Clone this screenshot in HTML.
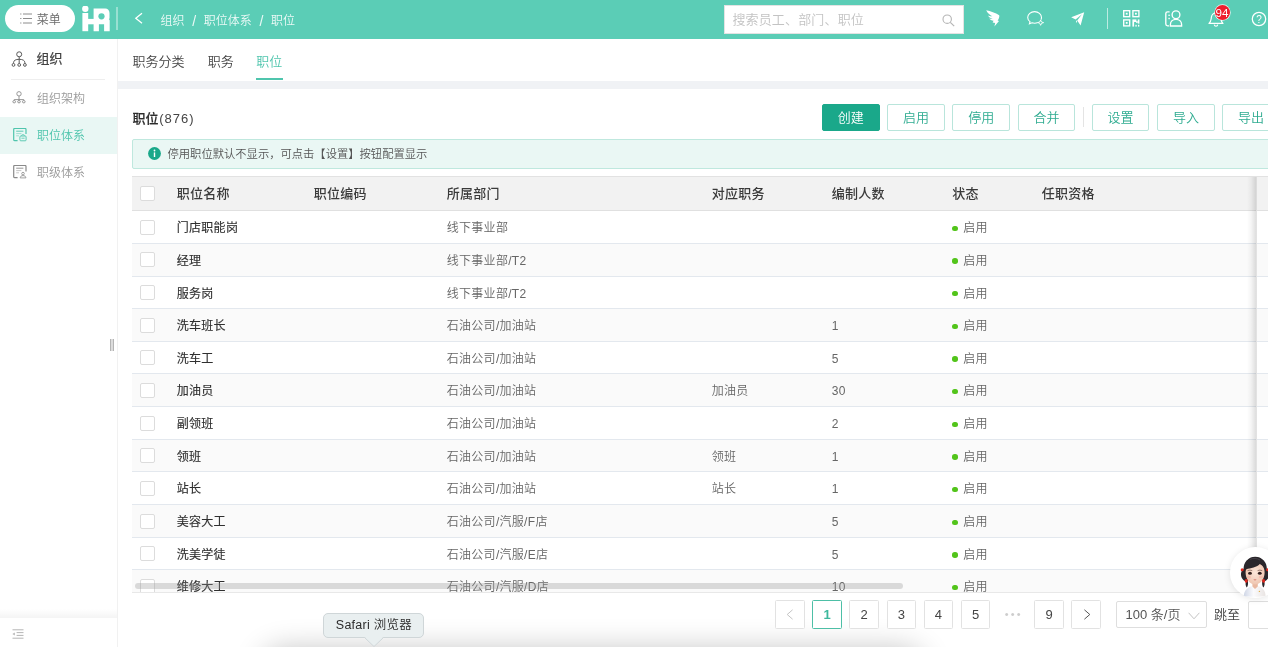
<!DOCTYPE html>
<html lang="zh-CN">
<head>
<meta charset="utf-8">
<title>职位</title>
<style>
*{box-sizing:border-box;margin:0;padding:0}
html,body{width:1268px;height:647px;overflow:hidden;background:#fff}
body{position:relative;will-change:transform;font-family:"Liberation Sans","Noto Sans CJK SC",sans-serif;font-size:12px;font-weight:350;color:#333;-webkit-font-smoothing:antialiased}
.abs{position:absolute}
/* header */
#hdr{position:absolute;left:0;top:0;width:1268px;height:38.7px;background:#5bcdb6}
#pill{position:absolute;left:4.8px;top:4.6px;width:70.4px;height:27.6px;border-radius:14px;background:#fff;color:#6a6a6a;font-size:12px;line-height:30.6px}
#pill span{position:absolute;left:32px;top:0}
#crumb{position:absolute;left:160.5px;top:10px;height:21px;line-height:22px;font-size:12px;color:rgba(255,255,255,.88);white-space:nowrap}
#crumb i{font-style:normal;margin:0 7.6px 0 7.7px;font-size:14px;line-height:10px;position:relative;top:.6px}
#search{position:absolute;left:724px;top:5px;width:240px;height:28.5px;background:#fff;border:1px solid #e3e3e3;color:#c3c3c3;font-size:13px;line-height:28.6px;padding-left:7.4px;letter-spacing:.16px;white-space:nowrap}
.hline{position:absolute;width:1.2px;background:rgba(255,255,255,.6)}
/* sidebar */
#side{position:absolute;left:0;top:38.7px;width:117.8px;height:609px;background:#fff;border-right:1px solid #f1f1f1}
.sitem{position:absolute;left:0;width:116.5px;height:37.1px;line-height:37.1px;font-size:12px;color:#9a9a9a;padding-left:37px;white-space:nowrap}
.sitem.on{background:#e9f7f4;color:#4fc5ad}
/* tabs */
#tabs{position:absolute;left:117.5px;top:38.7px;width:1151px;height:42.5px;background:#fff}
#tabs span{position:absolute;top:0;line-height:46px;font-size:13px;font-weight:350;color:#444;white-space:nowrap}
#strip{position:absolute;left:117.5px;top:81.2px;width:1151px;height:7.5px;background:#f0f2f5}
/* buttons */
.btn{position:absolute;top:103.5px;width:57.6px;height:27.8px;border:1px solid #b9e5db;border-radius:2px;background:#fff;color:#2eab90;font-size:13px;line-height:25.8px;text-align:center;white-space:nowrap}
.btn.pri{background:#1aa88a;border-color:#1aa88a;color:#fff}
/* alert */
#alert{position:absolute;left:132px;top:138.8px;width:1160px;height:30px;background:#eaf7f4;border:1px solid #bfe8de;border-radius:2px;font-size:11.3px;line-height:28.8px;color:#555;padding-left:34.5px;white-space:nowrap}
/* table */
#tbl{position:absolute;left:132.2px;top:175.8px;width:1136px;height:417px;overflow:hidden;border-top:1px solid #e2e2e2;border-bottom:1px solid #e8e8e8}
#thead{position:absolute;left:0;top:0;width:1136px;height:34px;background:#f2f2f2;border-bottom:1px solid #e0e0e0}
#thead span{position:absolute;top:0;line-height:34px;font-size:13px;font-weight:500;color:#3a3a3a;white-space:nowrap;letter-spacing:.25px}
.row{position:absolute;left:0;width:1136px;height:32.66px;margin-top:.4px;border-bottom:1px solid #e3e8ee;background:#fff}
.row.z{background:#fafafa}
.row span{position:absolute;top:0;line-height:35.6px;font-size:12px;color:#666;white-space:nowrap;letter-spacing:.3px}
.row span.n{left:44.5px;color:#303030;font-weight:400;-webkit-text-stroke:.14px #303030}
.row span.d{left:314.5px}
.row span.j{left:579.5px}
.row span.c{left:699.5px}
.row span.s{left:831px}
.row span.s:before{content:"";position:absolute;left:-11px;top:14.4px;width:5.6px;height:5.6px;border-radius:50%;background:#52c41a}
.cb{position:absolute;left:7.8px;width:15px;height:14.8px;border:1px solid #dcdcdc;border-radius:2px;background:#fff}
/* pagination */
.pg{position:absolute;top:599.8px;width:29.7px;height:29.3px;border:1px solid #e2e2e2;border-radius:1.5px;background:#fff;color:#444;font-size:13px;line-height:27.3px;text-align:center}
.pg.on{border-color:#4dbfa6;color:#3db89d;font-weight:700}
</style>
</head>
<body>

<!-- bottom glow (dock shadow) -->
<div class="abs" style="left:268px;top:655px;width:650px;height:40px;border-radius:16px;background:#999;box-shadow:0 0 30px 6px rgba(0,0,0,.24)"></div>

<!-- ===== header ===== -->
<div id="hdr">
  <div id="pill">
    <svg class="abs" style="left:15px;top:8.6px" width="13" height="11" viewBox="0 0 13 11"><g stroke="#808080" stroke-width="0.9" fill="none"><path d="M0.2 1H1.4M3 1H12M0.2 5.5H1.4M3 5.5H12M0.2 10H1.4M3 10H12"/></g></svg>
    <span>菜单</span>
  </div>
  <!-- logo iHR -->
  <svg class="abs" style="left:82px;top:5.5px" width="28" height="26" viewBox="0 0 28 26">
    <g fill="#fff">
      <circle cx="3.3" cy="2.8" r="3.2"/>
      <rect x="0.4" y="7" width="5.8" height="18.2"/>
      <rect x="6" y="12.9" width="6" height="5.4"/>
      <path d="M11.6 2.6H23.2C25.7 2.6 27.5 4.5 27.5 7V12C27.5 12.6 27.2 13 26.9 13.3C27.4 13.6 27.7 14 27.7 14.6V25.2H22.1V18.3H16.9V25.2H11.6Z"/>
    </g>
    <circle cx="19.5" cy="10.3" r="3.1" fill="#5bcdb6"/>
  </svg>
  <div class="hline" style="left:116.4px;top:7.2px;height:22.4px;width:1.4px;background:rgba(255,255,255,.38)"></div>
  <svg class="abs" style="left:134px;top:12.4px" width="10" height="13" viewBox="0 0 10 13"><path d="M8 1.2L1.8 6.2L8 11.2" stroke="#fff" stroke-width="1.3" fill="none"/></svg>
  <div id="crumb">组织<i>/</i>职位体系<i>/</i>职位</div>

  <div id="search">搜索员工、部门、职位
    <svg class="abs" style="left:217px;top:7.6px" width="13" height="13" viewBox="0 0 13 13"><circle cx="5.2" cy="5.2" r="4.2" stroke="#b5b5b5" stroke-width="1.1" fill="none"/><path d="M8.3 8.3L12.2 12.2" stroke="#b5b5b5" stroke-width="1.2"/></svg>
  </div>

  <!-- dingtalk -->
  <svg class="abs" style="left:986px;top:10px" width="14" height="17" viewBox="0 0 14 17"><path fill="#fff" d="M0.2 0.2C4.5 1.2 9.5 2.6 13.2 5.2C13.8 6.8 12.6 9.2 11.6 10.6L13 11L8.4 16.6L9.2 13L6.6 12.4L7.6 10.8C5.6 10.6 4 9.8 3.2 8.6C4.4 8.9 5.6 9 6.6 8.9C4.4 8.2 2.6 6.8 2 5.4C3.4 5.9 5 6.3 6.4 6.3C3.8 5 1.4 3 0.2 0.2Z"/></svg>
  <!-- chat -->
  <svg class="abs" style="left:1027px;top:11px" width="18" height="15" viewBox="0 0 18 15"><g fill="none" stroke="#fff" stroke-width="1.1"><path d="M10.8 11.6C9.8 12 8.8 12.2 7.6 12.2C6.6 12.2 5.8 12.1 5 11.8L2.4 12.8L3 10.6C1.6 9.6 0.7 8.1 0.7 6.4C0.7 3.2 3.8 0.6 7.6 0.6S14.5 3.2 14.5 6.4C14.5 7.2 14.3 8 13.9 8.7"/><path d="M13.6 9L14.5 11L16.6 11.6L14.6 12.3L13.6 14.3L12.8 12.3L10.8 11.6L12.8 10.9Z" stroke-width="0.9"/></g></svg>
  <!-- paper plane -->
  <svg class="abs" style="left:1071px;top:12px" width="14" height="14" viewBox="0 0 14 14"><path fill="#fff" d="M13.2 0.2L0.2 5.2L4.6 7.4L11 2.2L6.2 8.4L9.6 13.4Z"/><path fill="#fff" d="M5 8.2L6.2 9.2L5.2 11.2Z"/></svg>
  <div class="hline" style="left:1107px;top:8.2px;height:20.6px"></div>
  <!-- qr -->
  <svg class="abs" style="left:1122.5px;top:10px" width="17" height="17" viewBox="0 0 17 17"><g fill="none" stroke="#fff" stroke-width="1.35"><rect x="0.7" y="0.7" width="6" height="6"/><rect x="9.9" y="0.7" width="6" height="6"/><rect x="0.7" y="9.9" width="6" height="6"/></g><g fill="#fff"><rect x="2.8" y="2.8" width="1.8" height="1.8"/><rect x="12" y="2.8" width="1.8" height="1.8"/><rect x="2.8" y="12" width="1.8" height="1.8"/><rect x="9.4" y="9.4" width="1.7" height="7.2"/><rect x="11" y="9.4" width="2.4" height="2.6"/><rect x="13.2" y="11" width="1.4" height="2"/><rect x="14.8" y="9.4" width="1.6" height="4.2"/><rect x="12.4" y="14.8" width="1.3" height="1.8"/><rect x="15" y="14.8" width="1.3" height="1.8"/></g></svg>
  <!-- contacts -->
  <svg class="abs" style="left:1165px;top:10px" width="18" height="17" viewBox="0 0 18 17"><g fill="none" stroke="#fff" stroke-width="1.35"><path d="M4.6 1.8H2.6C1.6 1.8 0.8 2.6 0.8 3.6V14C0.8 15 1.6 15.8 2.6 15.8H4"/><circle cx="11" cy="4.8" r="3.9"/><path d="M5.4 16V14.6C5.4 11.4 7.8 9.4 11 9.4S16.6 11.4 16.6 14.6V16Z"/></g><g fill="#fff"><rect x="3.4" y="4.6" width="1.4" height="1.4"/><rect x="3.4" y="7.8" width="1.4" height="1.4"/></g></svg>
  <!-- bell -->
  <svg class="abs" style="left:1208px;top:12px" width="16" height="15" viewBox="0 0 16 15"><path d="M1 11.4C3.2 9.6 3 7.6 3.4 5.2C3.8 2.6 5.6 1 8 1S12.2 2.6 12.6 5.2C13 7.6 12.8 9.6 15 11.4Z" fill="none" stroke="#fff" stroke-width="1.2" stroke-linejoin="round"/><path d="M6.2 12.6C6.4 13.6 7.1 14.2 8 14.2S9.6 13.6 9.8 12.6" fill="none" stroke="#fff" stroke-width="1.1"/></svg>
  <div class="abs" style="left:1214.8px;top:4.6px;width:15.2px;height:15.2px;border-radius:50%;background:#ee1f2e;box-shadow:0 0 0 .7px rgba(255,255,255,.85);color:#fff;font-size:11.6px;line-height:15.6px;text-align:center;letter-spacing:.2px;overflow:hidden;font-weight:400;white-space:nowrap"><span style="margin-left:-.6px">94</span></div>
  <!-- help -->
  <svg class="abs" style="left:1250.6px;top:10.5px" width="16" height="16" viewBox="0 0 16 16"><circle cx="8" cy="8" r="6.7" fill="none" stroke="#fff" stroke-width="1.25"/><text x="8" y="11.6" font-size="10" fill="#fff" text-anchor="middle" font-family="Liberation Sans,sans-serif">?</text></svg>
</div>

<!-- ===== sidebar ===== -->
<div id="side">
  <svg class="abs" style="left:11.4px;top:12.4px" width="17" height="16" viewBox="0 0 17 16"><g fill="none" stroke="#505050" stroke-width="0.95"><circle cx="8.2" cy="3.3" r="2.5"/><path d="M8.2 5.8V12.4M2.5 12.4V11.8C2.5 9.4 4.8 8.3 8.2 8.3S13.9 9.4 13.9 11.8V12.4"/><circle cx="2.5" cy="13.9" r="1.4" fill="#fff"/><circle cx="8.2" cy="13.9" r="1.4" fill="#fff"/><circle cx="13.9" cy="13.9" r="1.4" fill="#fff"/></g></svg>
  <div class="abs" style="left:36.4px;top:10.3px;font-size:13px;font-weight:400;color:#424242;-webkit-text-stroke:.22px #424242;line-height:20px">组织</div>
  <div class="abs" style="left:10.5px;top:40px;width:94px;height:1px;background:#eee"></div>

  <div class="sitem" style="top:41px;line-height:39.6px">组织架构</div>
  <svg class="abs" style="left:12.3px;top:51.6px" width="14" height="14" viewBox="0 0 14 14"><g fill="none" stroke="#8c8c8c" stroke-width="0.9"><circle cx="7" cy="3.8" r="2.2"/><path d="M7 6V10.4M2.2 10.4V9.6H11.8V10.4"/><ellipse cx="2.2" cy="11.7" rx="1.35" ry="1.2" fill="#fff"/><ellipse cx="7" cy="11.7" rx="1.35" ry="1.2" fill="#fff"/><ellipse cx="11.8" cy="11.7" rx="1.35" ry="1.2" fill="#fff"/></g></svg>

  <div class="sitem on" style="top:78px;line-height:39.1px">职位体系</div>
  <svg class="abs" style="left:12.7px;top:89.2px" width="14" height="14" viewBox="0 0 14 14"><g fill="none" stroke="#4fc5ad"><path d="M4.6 12.6H1.6C1 12.6 0.7 12.3 0.7 11.7V1.4C0.7 0.8 1 0.5 1.6 0.5H12.2C12.8 0.5 13 0.8 13 1.4V6" stroke-width="1.2"/><path d="M3.2 3.2H10.4" stroke-width="0.9"/><path d="M3.2 5.6H8.4M3.2 7.8H6" stroke-width="0.7" opacity=".7"/><rect x="6.9" y="8" width="6.2" height="4.8" rx="0.9" stroke-width="0.9"/><path d="M8.7 8V7.4C8.7 6.9 9 6.7 9.4 6.7H10.6C11 6.7 11.3 6.9 11.3 7.4V8M8.4 10.2H11.6" stroke-width="0.8"/></g></svg>

  <div class="sitem" style="top:115.1px;line-height:39.6px">职级体系</div>
  <svg class="abs" style="left:12.7px;top:126.3px" width="14" height="14" viewBox="0 0 14 14"><g fill="none" stroke="#8a8a8a"><path d="M4.6 12.6H1.6C1 12.6 0.7 12.3 0.7 11.7V1.4C0.7 0.8 1 0.5 1.6 0.5H12.2C12.8 0.5 13 0.8 13 1.4V6.4" stroke-width="1.2"/><path d="M3.2 3.2H10.4" stroke-width="0.9"/><path d="M3.2 5.6H8.4M3.2 7.8H6" stroke-width="0.7" opacity=".7"/><circle cx="10" cy="8.6" r="1.3" stroke-width="0.8"/><path d="M7.2 12.9C7.2 11.4 8.4 10.6 10 10.6S12.9 11.4 12.9 12.9Z" stroke-width="0.8"/></g></svg>

  <!-- resize handle -->
  <div class="abs" style="left:110.2px;top:300.2px;width:3.6px;height:12.6px;background:#dcdcdc;border-left:1px solid #b4b4b4;border-right:1px solid #b4b4b4"></div>
  <!-- bottom collapse -->
  <div class="abs" style="left:0;top:570.6px;width:116.8px;height:8.6px;background:linear-gradient(rgba(0,0,0,0),rgba(0,0,0,.045))"></div>
  <svg class="abs" style="left:12px;top:590px" width="12" height="10" viewBox="0 0 12 10"><g stroke="#b5b5b5" stroke-width="1" fill="none"><path d="M0.5 0.8H11.5M4.6 3.6H11.5M4.6 6.4H11.5M0.5 9.2H11.5"/></g><path d="M0.4 5L2.8 3.4V6.6Z" fill="#b5b5b5"/></svg>
</div>

<!-- ===== tabs ===== -->
<div id="tabs">
  <span style="left:15px">职务分类</span>
  <span style="left:90.3px">职务</span>
  <span style="left:138.7px;color:#4fc5ad">职位</span>
  <div class="abs" style="left:138.5px;top:39.8px;width:27px;height:2px;background:#4fc5ad"></div>
</div>
<div id="strip"></div>

<!-- ===== toolbar ===== -->
<div class="abs" style="left:132.5px;top:108px;line-height:21px;font-size:13px;color:#2c2c2c;white-space:nowrap"><b style="font-weight:500;-webkit-text-stroke:.18px #2c2c2c">职位</b><span style="letter-spacing:.95px;color:#444;margin-left:.8px;font-weight:400">(876)</span></div>

<div class="btn pri" style="left:822px">创建</div>
<div class="btn" style="left:887.2px">启用</div>
<div class="btn" style="left:952.4px">停用</div>
<div class="btn" style="left:1017.8px">合并</div>
<div class="abs" style="left:1083px;top:107.4px;width:1px;height:20px;background:#e4e4e4"></div>
<div class="btn" style="left:1091.8px">设置</div>
<div class="btn" style="left:1157.1px">导入</div>
<div class="btn" style="left:1222.3px">导出</div>

<!-- ===== alert ===== -->
<div id="alert">
  <svg class="abs" style="left:15px;top:7.4px" width="13" height="13" viewBox="0 0 13 13"><circle cx="6.5" cy="6.5" r="6.4" fill="#1aa88a"/><rect x="5.8" y="5.4" width="1.4" height="4.6" fill="#fff"/><circle cx="6.5" cy="3.5" r="0.9" fill="#fff"/></svg>
  停用职位默认不显示，可点击【设置】按钮配置显示
</div>

<!-- ===== table ===== -->
<div id="tbl">
  <div id="thead">
    <div class="cb" style="top:9.6px"></div>
    <span style="left:44.5px">职位名称</span>
    <span style="left:181.5px">职位编码</span>
    <span style="left:314.5px">所属部门</span>
    <span style="left:579.5px">对应职务</span>
    <span style="left:699.5px">编制人数</span>
    <span style="left:820px">状态</span>
    <span style="left:909.5px">任职资格</span>
  </div>

  <div class="row" style="top:34px"><div class="cb" style="top:8.6px"></div><span class="n">门店职能岗</span><span class="d">线下事业部</span><span class="s">启用</span></div>
  <div class="row z" style="top:66.66px"><div class="cb" style="top:8.6px"></div><span class="n">经理</span><span class="d">线下事业部/T2</span><span class="s">启用</span></div>
  <div class="row" style="top:99.32px"><div class="cb" style="top:8.6px"></div><span class="n">服务岗</span><span class="d">线下事业部/T2</span><span class="s">启用</span></div>
  <div class="row z" style="top:131.98px"><div class="cb" style="top:8.6px"></div><span class="n">洗车班长</span><span class="d">石油公司/加油站</span><span class="c">1</span><span class="s">启用</span></div>
  <div class="row" style="top:164.64px"><div class="cb" style="top:8.6px"></div><span class="n">洗车工</span><span class="d">石油公司/加油站</span><span class="c">5</span><span class="s">启用</span></div>
  <div class="row z" style="top:197.3px"><div class="cb" style="top:8.6px"></div><span class="n">加油员</span><span class="d">石油公司/加油站</span><span class="j">加油员</span><span class="c">30</span><span class="s">启用</span></div>
  <div class="row" style="top:229.96px"><div class="cb" style="top:8.6px"></div><span class="n">副领班</span><span class="d">石油公司/加油站</span><span class="c">2</span><span class="s">启用</span></div>
  <div class="row z" style="top:262.62px"><div class="cb" style="top:8.6px"></div><span class="n">领班</span><span class="d">石油公司/加油站</span><span class="j">领班</span><span class="c">1</span><span class="s">启用</span></div>
  <div class="row" style="top:295.28px"><div class="cb" style="top:8.6px"></div><span class="n">站长</span><span class="d">石油公司/加油站</span><span class="j">站长</span><span class="c">1</span><span class="s">启用</span></div>
  <div class="row z" style="top:327.94px"><div class="cb" style="top:8.6px"></div><span class="n">美容大工</span><span class="d">石油公司/汽服/F店</span><span class="c">5</span><span class="s">启用</span></div>
  <div class="row" style="top:360.6px"><div class="cb" style="top:8.6px"></div><span class="n">洗美学徒</span><span class="d">石油公司/汽服/E店</span><span class="c">5</span><span class="s">启用</span></div>
  <div class="row z" style="top:393.26px"><div class="cb" style="top:8.6px"></div><span class="n">维修大工</span><span class="d">石油公司/汽服/D店</span><span class="c">10</span><span class="s">启用</span></div>

  <!-- horizontal scrollbar -->
  <div class="abs" style="left:2.6px;top:406.6px;width:768.6px;height:5.6px;border-radius:3px;background:rgba(150,150,150,.32)"></div>
  <!-- fixed right column -->
  <div class="abs" style="left:1114.4px;top:0;width:9px;height:417px;background:linear-gradient(to right,rgba(0,0,0,0),rgba(0,0,0,.04) 45%,rgba(0,0,0,.13))"></div>
  <div class="abs" style="left:1123.4px;top:0;width:14px;height:417px;border-left:1px solid #e2e2e2"></div>
  <div class="abs" style="left:1123.4px;top:0;width:14px;height:34px;background:#f2f2f2;border-bottom:1px solid #e0e0e0;border-left:1px solid #dcdcdc"></div>
</div>

<!-- ===== pagination ===== -->
<div class="pg" style="left:775.2px;color:#bbb"><svg class="abs" style="left:9.5px;top:8.5px" width="8" height="11" viewBox="0 0 8 11"><path d="M6.6 0.8L1.2 5.5L6.6 10.2" stroke="#c4c4c4" stroke-width="1" fill="none"/></svg></div>
<div class="pg on" style="left:812.3px">1</div>
<div class="pg" style="left:849.4px">2</div>
<div class="pg" style="left:886.5px">3</div>
<div class="pg" style="left:923.6px">4</div>
<div class="pg" style="left:960.7px">5</div>
<div class="abs" style="left:997.8px;top:599.8px;width:29.7px;height:29.3px;line-height:28px;text-align:center;color:#cdcdcd;font-size:11px;letter-spacing:2.2px;padding-left:2.2px;line-height:29.5px">•••</div>
<div class="pg" style="left:1034.3px">9</div>
<div class="pg" style="left:1071.4px"><svg class="abs" style="left:10.5px;top:8.5px" width="8" height="11" viewBox="0 0 8 11"><path d="M1.4 0.8L6.8 5.5L1.4 10.2" stroke="#555" stroke-width="1" fill="none"/></svg></div>
<div class="abs" style="left:1116px;top:601.2px;width:90.7px;height:27px;border:1px solid #dedede;border-radius:2px;background:#fff;color:#555;font-size:13px;line-height:25px;padding-left:8.5px;white-space:nowrap">100 条/页<svg class="abs" style="left:71px;top:9.4px" width="12" height="8" viewBox="0 0 12 8"><path d="M0.6 0.8L6 6.8L11.4 0.8" stroke="#c4c4c4" stroke-width="1" fill="none"/></svg></div>
<div class="abs" style="left:1214px;top:601.2px;line-height:27px;font-size:13px;color:#444;white-space:nowrap">跳至</div>
<div class="abs" style="left:1248.3px;top:601.2px;width:40px;height:28.3px;border:1px solid #dedede;border-radius:2px;background:#fff"></div>

<!-- ===== tooltip ===== -->
<div class="abs" style="left:323.4px;top:613.2px;width:101px;height:24.8px;border:1px solid #cfd6d8;border-radius:5px;background:#e9eff0;color:#2b2b2b;font-size:12.5px;line-height:23.6px;text-align:center;white-space:nowrap;letter-spacing:.25px">Safari 浏览器</div>
<svg class="abs" style="left:364px;top:637px" width="20" height="10" viewBox="0 0 20 10"><path d="M0.5 0.5L10 9.5L19.5 0.5" fill="#e9eff0" stroke="#cfd6d8" stroke-width="1"/><rect x="1.6" y="0" width="16.8" height="1" fill="#e9eff0"/></svg>

<!-- ===== avatar ===== -->
<div class="abs" style="left:1230px;top:547px;width:50.6px;height:50.6px;border-radius:50%;background:#fff;box-shadow:0 1px 7px rgba(0,0,0,.10)"></div>
<svg class="abs" style="left:1230px;top:547px" width="50" height="51" viewBox="0 0 50 51">
  <defs>
    <radialGradient id="fg" cx="50%" cy="45%" r="60%"><stop offset="0" stop-color="#fbe6da"/><stop offset="1" stop-color="#eec3ad"/></radialGradient>
    <linearGradient id="sg" x1="0" y1="0" x2="1" y2="0"><stop offset="0" stop-color="#cfd6e6"/><stop offset=".45" stop-color="#fbfbfd"/><stop offset="1" stop-color="#e9e4e2"/></linearGradient>
  </defs>
  <!-- pigtails -->
  <path d="M14.6 21.5C11.4 22.6 10.2 26.6 11.6 30.4C12.6 32.8 14.6 34 16 34.2C15.2 36.6 15.6 39 16.8 40.6C18 38.8 18.4 36.4 17.8 34C19 30 18 24.6 14.6 21.5Z" fill="#2a262b"/>
  <path d="M35.6 21.5C38.8 22.6 40 26.6 38.6 30.4C37.6 32.8 35.6 34 34.2 34.2C35 36.6 34.6 39 33.4 40.6C32.2 38.8 31.8 36.4 32.4 34C31.2 30 32.2 24.6 35.6 21.5Z" fill="#2a262b"/>
  <!-- shirt -->
  <path d="M13.8 48.8C14.2 43.6 17.4 40.4 21.6 39.2L25 41.4L28.6 39.2C32.6 40.4 35.4 43.6 35.6 48.8C32 50.2 17.6 50.2 13.8 48.8Z" fill="url(#sg)"/>
  <!-- neck -->
  <path d="M22.4 35H27.8V39.6L25 42L22.4 39.6Z" fill="#eab9a2"/>
  <!-- hair back -->
  <ellipse cx="25.2" cy="21.6" rx="11.6" ry="11.8" fill="#2a262b"/>
  <!-- face -->
  <path d="M15.6 25.4C15.6 19.2 19.6 15.8 25 15.8S34.6 19.2 34.6 25.4C34.6 32 30.2 37.4 25 37.4S15.6 32 15.6 25.4Z" fill="url(#fg)"/>
  <!-- bangs -->
  <path d="M14.2 25.6C13 16.6 17.6 10.2 25.2 10.2S37.4 16.6 36.2 25.6C35.6 22 33.6 19 30 16.8C27.4 20.2 20 21.4 16.4 22.2C15.4 23 14.6 24.2 14.2 25.6Z" fill="#2a262b"/>
  <path d="M20 12.4C23 11 27 11.2 30 13" stroke="#55505a" stroke-width="1" fill="none" opacity=".6"/>
  <!-- ties -->
  <circle cx="12.2" cy="22.7" r="1.5" fill="#e0251c"/>
  <circle cx="37.6" cy="22.7" r="1.5" fill="#e0251c"/>
  <ellipse cx="16.2" cy="33.9" rx="1.5" ry="1.8" fill="#e0251c"/>
  <ellipse cx="33.6" cy="33.9" rx="1.5" ry="1.8" fill="#e0251c"/>
  <!-- eyes/brows -->
  <ellipse cx="20" cy="26.3" rx="1.9" ry="1.5" fill="#33211f"/>
  <ellipse cx="29.8" cy="26.3" rx="1.9" ry="1.5" fill="#33211f"/>
  <path d="M17.6 23.6Q20 22.6 22.2 23.6M27.6 23.6Q29.8 22.6 32.2 23.6" stroke="#5a4038" stroke-width="0.6" fill="none"/>
  <ellipse cx="19" cy="30" rx="2" ry="1.3" fill="#f2a9a0" opacity=".5"/>
  <ellipse cx="30.8" cy="30" rx="2" ry="1.3" fill="#f2a9a0" opacity=".5"/>
  <path d="M23.8 32.6Q25 33.4 26.2 32.6" stroke="#d0685f" stroke-width="0.8" fill="none"/>
  <circle cx="29.4" cy="44.4" r="0.7" fill="#e2b04a"/>
</svg>

</body>
</html>
